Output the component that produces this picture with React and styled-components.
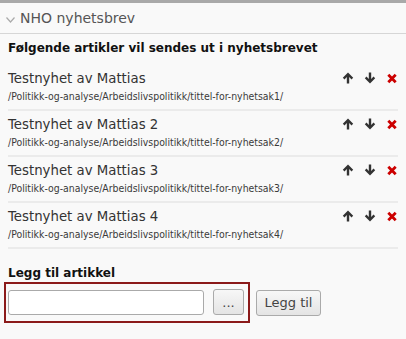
import styled, { createGlobalStyle } from 'styled-components';

const GlobalStyle = createGlobalStyle`
  html, body {
    margin: 0;
    padding: 0;
    background: #f9f9f9;
  }
  body {
    font-family: 'DejaVu Sans', Verdana, sans-serif;
    color: #222;
  }
`;

const ARTICLES = [
  { title: 'Testnyhet av Mattias', path: '/Politikk-og-analyse/Arbeidslivspolitikk/tittel-for-nyhetsak1/' },
  { title: 'Testnyhet av Mattias 2', path: '/Politikk-og-analyse/Arbeidslivspolitikk/tittel-for-nyhetsak2/' },
  { title: 'Testnyhet av Mattias 3', path: '/Politikk-og-analyse/Arbeidslivspolitikk/tittel-for-nyhetsak3/' },
  { title: 'Testnyhet av Mattias 4', path: '/Politikk-og-analyse/Arbeidslivspolitikk/tittel-for-nyhetsak4/' },
];

const Panel = styled.div`
  width: 406px;
  height: 339px;
  border-top: 3px solid #a9a9a9;
  box-sizing: border-box;
  background: #f9f9f9;
`;

const Header = styled.div`
  display: flex;
  align-items: center;
  gap: 5px;
  height: 30px;
  padding: 0 6px;
  border-bottom: 1px solid #d6d6d6;
  font-size: 14px;
  color: #555;
`;

const Chevron = styled.svg`
  width: 9px;
  height: 6px;
  margin-top: 3px;
`;

const Body = styled.div`
  padding: 7px 8px 0 8px;
`;

const Heading = styled.div`
  font-size: 12px;
  font-weight: bold;
  color: #111;
  margin-bottom: 10px;
`;

const List = styled.div`
  display: flex;
  flex-direction: column;
`;

const Row = styled.div`
  display: flex;
  justify-content: space-between;
  padding: 6px 0 5px 0;
  border-bottom: 2px solid #ebebeb;
  height: 33px;
`;

const Info = styled.div`
  display: flex;
  flex-direction: column;
  gap: 4px;
`;

const Title = styled.div`
  font-size: 13.3px;
  color: #333;
`;

const Path = styled.div`
  font-family: 'DejaVu Sans Condensed', 'DejaVu Sans', sans-serif;
  font-size: 10.4px;
  color: #3a3a3a;
`;

const Actions = styled.div`
  display: flex;
  gap: 10px;
  padding-top: 1px;
`;

const IconBtn = styled.svg`
  width: 12px;
  height: 12px;
  cursor: pointer;
`;

const AddSection = styled.div`
  padding: 17px 0 0 0;
`;

const AddLabel = styled.div`
  font-size: 12px;
  font-weight: bold;
  color: #111;
  margin-bottom: 2px;
`;

const AddRow = styled.div`
  display: flex;
  align-items: center;
  gap: 6px;
`;

const Focus = styled.div`
  display: flex;
  align-items: center;
  gap: 9px;
  margin-left: -4px;
  padding: 5px 4px 6px 2px;
  border: 2px solid #8b1a1a;
`;

const Input = styled.input`
  width: 196px;
  height: 25px;
  box-sizing: border-box;
  border: 1px solid #aaa;
  border-radius: 3px;
  background: #fff;
`;

const Button = styled.button`
  width: ${(p) => p.w}px;
  height: 26px;
  padding: 0;
  border: 1px solid #aaa;
  border-radius: 3px;
  background: linear-gradient(#f7f7f7, #e4e4e4);
  font-family: 'DejaVu Sans', sans-serif;
  font-size: 13px;
  color: #444;
`;

const Up = () => (
  <IconBtn viewBox="0 0 12 12">
    <path d="M6 0.5 L11.2 5.8 L9.5 7.4 L7.2 5.1 V11.5 H4.8 V5.1 L2.5 7.4 L0.8 5.8 Z" fill="#333" />
  </IconBtn>
);

const Down = () => (
  <IconBtn viewBox="0 0 12 12">
    <path d="M6 11.5 L11.2 6.2 L9.5 4.6 L7.2 6.9 V0.5 H4.8 V6.9 L2.5 4.6 L0.8 6.2 Z" fill="#333" />
  </IconBtn>
);

const Remove = () => (
  <IconBtn viewBox="0 0 12 12">
    <path d="M2.3 2.8 L9.7 10.2 M9.7 2.8 L2.3 10.2" stroke="#c00" strokeWidth="2.8" />
  </IconBtn>
);

export default function App() {
  return (
    <Panel>
      <GlobalStyle />
      <Header>
        <Chevron viewBox="0 0 9 6">
          <path d="M0.5 0.5 L4.5 5 L8.5 0.5" stroke="#aaa" strokeWidth="1.2" fill="none" />
        </Chevron>
        NHO nyhetsbrev
      </Header>
      <Body>
        <Heading>Følgende artikler vil sendes ut i nyhetsbrevet</Heading>
        <List>
          {ARTICLES.map((a) => (
            <Row key={a.path}>
              <Info>
                <Title>{a.title}</Title>
                <Path>{a.path}</Path>
              </Info>
              <Actions>
                <Up />
                <Down />
                <Remove />
              </Actions>
            </Row>
          ))}
        </List>
        <AddSection>
          <AddLabel>Legg til artikkel</AddLabel>
          <AddRow>
            <Focus>
              <Input type="text" />
              <Button w={31}>...</Button>
            </Focus>
            <Button w={65}>Legg til</Button>
          </AddRow>
        </AddSection>
      </Body>
    </Panel>
  );
}
